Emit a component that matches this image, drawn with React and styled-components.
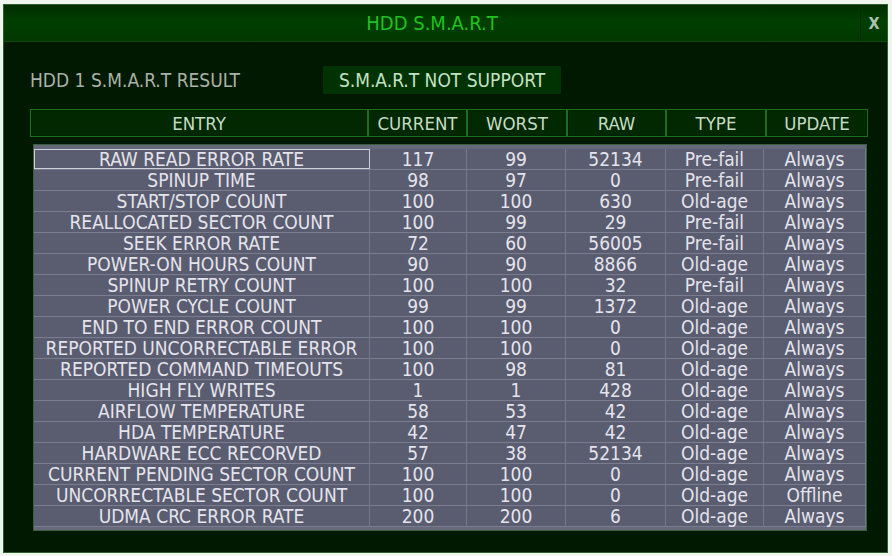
import React from "react";
import styled, { createGlobalStyle } from "styled-components";

const GlobalStyle = createGlobalStyle`
  body {
    margin: 0;
    padding: 0;
    background: #eef6ee;
    font-family: "DejaVu Sans Condensed", "DejaVu Sans", sans-serif;
    font-stretch: condensed;
  }
`;

const rows = [
  ["RAW READ ERROR RATE", "117", "99", "52134", "Pre-fail", "Always"],
  ["SPINUP TIME", "98", "97", "0", "Pre-fail", "Always"],
  ["START/STOP COUNT", "100", "100", "630", "Old-age", "Always"],
  ["REALLOCATED SECTOR COUNT", "100", "99", "29", "Pre-fail", "Always"],
  ["SEEK ERROR RATE", "72", "60", "56005", "Pre-fail", "Always"],
  ["POWER-ON HOURS COUNT", "90", "90", "8866", "Old-age", "Always"],
  ["SPINUP RETRY COUNT", "100", "100", "32", "Pre-fail", "Always"],
  ["POWER CYCLE COUNT", "99", "99", "1372", "Old-age", "Always"],
  ["END TO END ERROR COUNT", "100", "100", "0", "Old-age", "Always"],
  ["REPORTED UNCORRECTABLE ERROR", "100", "100", "0", "Old-age", "Always"],
  ["REPORTED COMMAND TIMEOUTS", "100", "98", "81", "Old-age", "Always"],
  ["HIGH FLY WRITES", "1", "1", "428", "Old-age", "Always"],
  ["AIRFLOW TEMPERATURE", "58", "53", "42", "Old-age", "Always"],
  ["HDA TEMPERATURE", "42", "47", "42", "Old-age", "Always"],
  ["HARDWARE ECC RECORVED", "57", "38", "52134", "Old-age", "Always"],
  ["CURRENT PENDING SECTOR COUNT", "100", "100", "0", "Old-age", "Always"],
  ["UNCORRECTABLE SECTOR COUNT", "100", "100", "0", "Old-age", "Offline"],
  ["UDMA CRC ERROR RATE", "200", "200", "6", "Old-age", "Always"],
];

const headers = ["ENTRY", "CURRENT", "WORST", "RAW", "TYPE", "UPDATE"];

export default function App() {
  return (
    <>
      <GlobalStyle />
      <Window>
        <TitleBar>
          <Title>HDD S.M.A.R.T</Title>
          <Close>X</Close>
        </TitleBar>
        <Content>
          <ResultRow>
            <ResultLabel>HDD 1 S.M.A.R.T RESULT</ResultLabel>
            <Status>S.M.A.R.T NOT SUPPORT</Status>
          </ResultRow>
          <HeaderRow>
            {headers.map((h) => (
              <HeadCell key={h}>{h}</HeadCell>
            ))}
          </HeaderRow>
          <Body>
            {rows.map((r, i) => (
              <Row key={r[0]}>
                {r.map((c, j) => (
                  <Cell key={j} $focused={i === 0 && j === 0}>
                    {c}
                  </Cell>
                ))}
              </Row>
            ))}
          </Body>
        </Content>
      </Window>
    </>
  );
}

const Window = styled.div`
  box-sizing: border-box;
  margin: 4px 0 0 3px;
  width: 885px;
  height: 549px;
  border: 1px solid #2f5f2f;
  background: #001900;
  display: flex;
  flex-direction: column;
`;

const TitleBar = styled.div`
  display: flex;
  height: 36px;
  background: linear-gradient(#012d01, #013f01 45%, #013801);
  border-bottom: 1px solid #0b4a0b;
`;

const Title = styled.div`
  flex: 1;
  display: flex;
  align-items: center;
  justify-content: center;
  color: #20c020;
  font-size: 20px;
`;

const Close = styled.div`
  width: 26px;
  display: flex;
  align-items: center;
  justify-content: center;
  border-left: 1px solid #012a01;
  color: #a8c4b0;
  font-size: 16px;
  font-weight: bold;
`;

const Content = styled.div`
  display: flex;
  flex-direction: column;
  padding: 24px 0 0 26px;
`;

const ResultRow = styled.div`
  display: flex;
  align-items: center;
  height: 28px;
`;

const ResultLabel = styled.div`
  width: 293px;
  color: #a9b2a9;
  font-size: 19px;
`;

const Status = styled.div`
  width: 238px;
  height: 28px;
  display: flex;
  align-items: center;
  justify-content: center;
  background: #013201;
  color: #c4e2c4;
  font-size: 19px;
`;

const HeaderRow = styled.div`
  display: grid;
  grid-template-columns: 338px 99px 100px 99px 100px 102px;
  margin-top: 15px;
  height: 28px;
`;

const HeadCell = styled.div`
  box-sizing: border-box;
  display: flex;
  align-items: center;
  justify-content: center;
  border: 1px solid #1d6e1d;
  box-shadow: inset 0 0 0 1px #012201;
  background: #012801;
  color: #c6dcc6;
  font-size: 18.5px;
`;

const Body = styled.div`
  box-sizing: border-box;
  margin: 7px 0 0 3px;
  width: 834px;
  padding: 4px 0 3px;
  background: #66687c;
  border: 1px solid #3a5e3e;
`;

const Row = styled.div`
  display: grid;
  grid-template-columns: 336px 97px 99px 100px 98px 102px;
  height: 21px;
  background: #5a5c70;
  border-bottom: 1px solid #7a7c90;
  box-sizing: border-box;
`;

const Cell = styled.div`
  box-sizing: border-box;
  display: flex;
  align-items: center;
  justify-content: center;
  border-right: 1px solid #75778b;
  color: #e4e4ec;
  font-size: 19px;
  line-height: 20px;
  outline: ${(p) => (p.$focused ? "1px solid #d0d0d8" : "none")};
  outline-offset: -1px;
`;
